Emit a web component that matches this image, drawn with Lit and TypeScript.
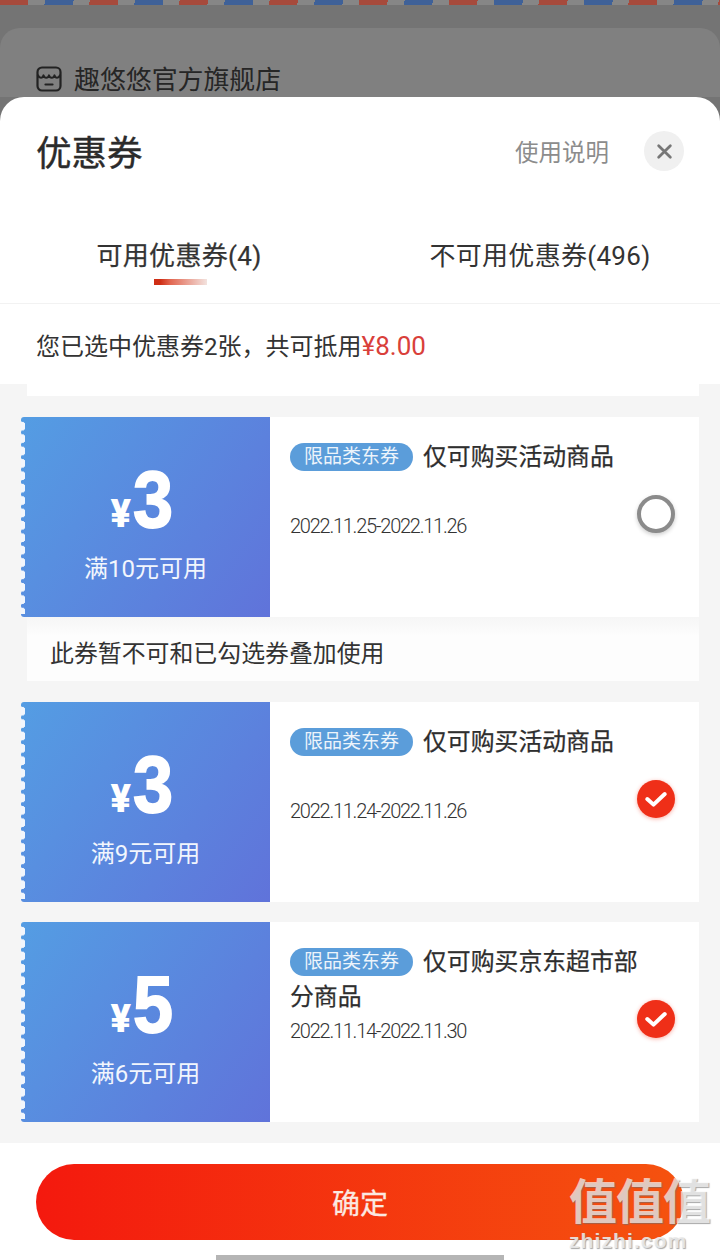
import { LitElement, html, css, svg } from "lit";
import { customElement } from "lit/decorators.js";
import { classMap } from "lit/directives/class-map.js";

type Coupon = { amt: string; cond: string; title: string; date: string; checked: boolean; note?: string };

const COUPONS: Coupon[] = [
  { amt: "3", cond: "满10元可用", title: "仅可购买活动商品", date: "2022.11.25-2022.11.26", checked: false, note: "此券暂不可和已勾选券叠加使用" },
  { amt: "3", cond: "满9元可用", title: "仅可购买活动商品", date: "2022.11.24-2022.11.26", checked: true },
  { amt: "5", cond: "满6元可用", title: "仅可购买京东超市部分商品", date: "2022.11.14-2022.11.30", checked: true },
];

const shopIcon = svg`<svg class="shop-icon" viewBox="0 0 26 26" fill="none" stroke="#222" stroke-width="2.2" stroke-linecap="round" stroke-linejoin="round">
  <path d="M6 1.5h14a4.500 4.500 0 0 1 4.500 4.500v14a4.500 4.500 0 0 1-4.500 4.500H6A4.500 4.500 0 0 1 1.500 20V6A4.500 4.500 0 0 1 6 1.500z"/>
  <path d="M2 9.500c1.500 3 4.500 3 5.500 0 1 3 4.500 3 5.500 0 1 3 4.500 3 5.500 0 1 3 4 3 5.500 0"/>
  <path d="M9.500 18.500h7"/>
</svg>`;

@customElement("app-root")
export class AppRoot extends LitElement {
  static styles = css`
    :host {
      display: block;
      width: 720px;
      height: 1260px;
      overflow: hidden;
      position: relative;
      background: #747474;
      font-family: Roboto, "Noto Sans CJK SC", sans-serif;
      color: #2e2e2e;
    }
    .behind { height: 97px; overflow: hidden; }
    .stripes {
      height: 5px;
      background: repeating-linear-gradient(
        100deg,
        #a64a3c 0 28px,
        #868686 28px 44.5px,
        #3f6198 44.5px 72.5px,
        #868686 72.5px 88.5px
      );
    }
    .store-card {
      margin-top: 23px;
      height: 90px;
      border-radius: 20px 20px 0 0;
      background: #808080;
      display: flex;
      align-items: flex-start;
      gap: 12px;
      padding: 38px 0 0 36px;
      box-sizing: border-box;
      font-size: 25.9px;
      line-height: 28px;
      color: #262626;
    }
    .shop-icon { width: 26px; height: 26px; }
    .sheet {
      height: 1163px;
      background: #fff;
      border-radius: 24px 24px 0 0;
      display: flex;
      flex-direction: column;
    }
    .head {
      flex: none;
      height: 112px;
      display: flex;
      align-items: flex-start;
      padding: 34px 36px 0 36px;
      box-sizing: border-box;
    }
    .head h1 {
      margin: 0;
      font-size: 35.500px;
      line-height: 44px;
      font-weight: 400;
      -webkit-text-stroke: 0.4px #2b2b2b;
      color: #2b2b2b;
      flex: 1;
      padding-top: 1px;
    }
    .help {
      font-size: 23.500px;
      line-height: 44px;
      color: #8c8c8c;
      margin-right: 35px;
    }
    .close {
      width: 40px;
      height: 40px;
      border-radius: 50%;
      background: #f0f0f0;
      display: flex;
      align-items: center;
      justify-content: center;
    }
    .close svg { width: 17px; height: 17px; }
    .tabs {
      flex: none;
      height: 94px;
      display: grid;
      grid-template-columns: 1fr 1fr;
      border-bottom: 1px solid #f2f2f2;
      box-sizing: content-box;
    }
    .tab {
      display: flex;
      flex-direction: column;
      align-items: center;
      font-size: 26px;
      letter-spacing: 0.3px;
      line-height: 36px;
      padding-top: 29px;
      color: #333;
    }
    .tab.on { padding-right: 2px; -webkit-text-stroke: 0.25px #333; }
    .bar {
      width: 53px;
      height: 6px;
      margin-top: 5px;
      margin-left: 2px;
      background: linear-gradient(90deg, #cf2f16 0 12%, #e2654f 30%, #f3e3df 100%);
    }
    .summary {
      flex: none;
      height: 80px;
      display: flex;
      align-items: center;
      padding-left: 36px;
      font-size: 24px;
      color: #333;
    }
    .price { color: #d9403a; font-size: 26px; }
    .list {
      flex: 1;
      background: #f5f5f5;
      display: flex;
      flex-direction: column;
      padding: 0 21px;
    }
    .cap {
      flex: none;
      height: 12px;
      margin: 0 0 21px 6px;
      background: #fff;
    }
    .coupon { flex: none; display: flex; height: 200px; margin-bottom: 20px; }
    .coupon.noted { margin-bottom: 0; }
    .ticket {
      position: relative;
      width: 249px;
      flex: none;
      background: linear-gradient(125deg, #549de3 0%, #6073da 100%);
      border-radius: 3px 0 0 3px;
      color: #fff;
      display: flex;
      flex-direction: column;
      align-items: center;
    }
    .scallop {
      position: absolute;
      left: 0;
      top: 3px;
      bottom: 3px;
      width: 4px;
      background: radial-gradient(circle at 0 50%, #f2f6fc 0 4.500px, transparent 5px) 0 0 / 4px 12.400px repeat-y;
    }
    .amount {
      display: flex;
      align-items: baseline;
      height: 80px;
      line-height: 80px;
      margin-top: 43px;
      font-family: "Liberation Sans", sans-serif;
      font-weight: 700;
      padding-right: 7px;
    }
    .yen {
      font-size: 38px;
      font-family: Roboto, sans-serif;
      font-weight: 900;
      margin-right: 2px;
    }
    .num {
      font-size: 80px;
      display: inline-block;
      transform: scaleX(0.9);
      transform-origin: 0 50%;
      margin-right: -4px;
      -webkit-text-stroke: 1.800px #fff;
    }
    .cond { font-size: 24px; line-height: 30px; margin-top: 14px; color: #f2f6fd; }
    .body {
      flex: 1;
      background: #fff;
      display: grid;
      min-width: 0;
    }
    .info, .tick { grid-area: 1 / 1; }
    .info { padding: 23px 57px 0 20px; }
    .title {
      height: 70px;
      font-size: 23.850px;
      line-height: 35px;
      font-weight: 400;
      -webkit-text-stroke: 0.25px #2e2e2e;
      color: #2e2e2e;
    }
    .pill {
      display: inline-block;
      vertical-align: top;
      height: 28px;
      line-height: 28px;
      margin: 3px 10px 0 0;
      padding: 0 14px;
      border-radius: 14px;
      background: #5b9dda;
      color: #edf4fb;
      -webkit-text-stroke: 0;
      font-size: 19px;
      font-weight: 400;
    }
    .date {
      font-size: 20px;
      line-height: 32px;
      color: #333;
      font-weight: 300;
      letter-spacing: -1.250px;
    }
    .tick {
      justify-self: end;
      align-self: start;
      margin: 78px 24px 0 0;
      width: 38px;
      height: 38px;
      border-radius: 50%;
      box-sizing: border-box;
      display: flex;
      align-items: center;
      justify-content: center;
    }
    .tick.off {
      border: 4px solid #8b8b8b;
      background: #fff;
      box-shadow: 0 2px 4px rgba(0, 0, 0, 0.2);
    }
    .tick.yes {
      background: #ef2f18;
      box-shadow: 0 1px 4px rgba(239, 47, 24, 0.4);
    }
    .tick svg { width: 30px; height: 30px; }
    .note {
      flex: none;
      height: 64px;
      margin: 0 0 21px 6px;
      padding: 5px 0 0 23px;
      box-sizing: border-box;
      display: flex;
      align-items: center;
      background: linear-gradient(180deg, #f6f6f6, #fdfdfd 30%);
      font-size: 23.900px;
      color: #333;
    }
    .footer {
      height: 117px;
      background: #fff;
      padding: 21px 36px 0;
      box-sizing: border-box;
      flex: none;
    }
    .confirm {
      height: 76px;
      border-radius: 38px;
      background: linear-gradient(90deg, #f4190e 0%, #f5530f 100%);
      color: #fbe9e2;
      font-size: 28px;
      display: flex;
      align-items: center;
      justify-content: center;
      box-sizing: border-box;
      -webkit-text-stroke: 0.3px #fbe9e2;
    }
    .home {
      position: absolute;
      left: 216px;
      bottom: 0;
      width: 288px;
      height: 5px;
      background: #b5b5b5;
    }
    .mark {
      position: absolute;
      left: 569px;
      top: 1177px;
      width: 146px;
      color: rgba(255, 255, 255, 0.68);
      text-shadow: 1px 1px 1px rgba(110, 110, 110, 0.6);
      display: flex;
      flex-direction: column;
      align-items: flex-start;
    }
    .cn {
      font-size: 48px;
      line-height: 52px;
      font-weight: 700;
      letter-spacing: -1px;
      white-space: nowrap;
    }
    .en {
      font-family: "Liberation Sans", sans-serif;
      font-size: 21px;
      line-height: 22px;
      margin-top: 1px;
      letter-spacing: 1.100px;
      font-weight: 700;
      color: rgba(235, 235, 235, 0.9);
    }
  `;

  private coupon(c: Coupon) {
    return html`
      <div class=${classMap({ coupon: true, noted: !!c.note })}>
        <div class="ticket">
          <div class="scallop"></div>
          <div class="amount"><span class="yen">¥</span><span class="num">${c.amt}</span></div>
          <div class="cond">${c.cond}</div>
        </div>
        <div class="body">
          <div class="info">
            <div class="title"><span class="pill">限品类东券</span>${c.title}</div>
            <div class="date">${c.date}</div>
          </div>
          ${c.checked
            ? html`<div class="tick yes">
                <svg viewBox="0 0 24 24" fill="none" stroke="#fff" stroke-width="3.200" stroke-linecap="round" stroke-linejoin="round"><path d="M5 12l5 4.500L19 8"/></svg>
              </div>`
            : html`<div class="tick off"></div>`}
        </div>
      </div>
      ${c.note ? html`<div class="note">${c.note}</div>` : null}
    `;
  }

  render() {
    return html`
      <div class="behind">
        <div class="stripes"></div>
        <div class="store-card">${shopIcon}<span>趣悠悠官方旗舰店</span></div>
      </div>
      <div class="sheet">
        <div class="head">
          <h1>优惠券</h1>
          <span class="help">使用说明</span>
          <div class="close">
            <svg viewBox="0 0 16 16" fill="none" stroke="#777" stroke-width="2.600" stroke-linecap="round"><path d="M2.500 2.500l11 11M13.500 2.500l-11 11"/></svg>
          </div>
        </div>
        <div class="tabs">
          <div class="tab on"><span>可用优惠券(4)</span><div class="bar"></div></div>
          <div class="tab"><span>不可用优惠券(496)</span></div>
        </div>
        <div class="summary"><span>您已选中优惠券2张，共可抵用<span class="price">¥8.00</span></span></div>
        <div class="list">
          <div class="cap"></div>
          ${COUPONS.map((c) => this.coupon(c))}
        </div>
        <div class="footer"><div class="confirm">确定</div></div>
      </div>
      <div class="home"></div>
      <div class="mark"><span class="cn">值值值</span><span class="en">zhizhi.com</span></div>
    `;
  }
}
